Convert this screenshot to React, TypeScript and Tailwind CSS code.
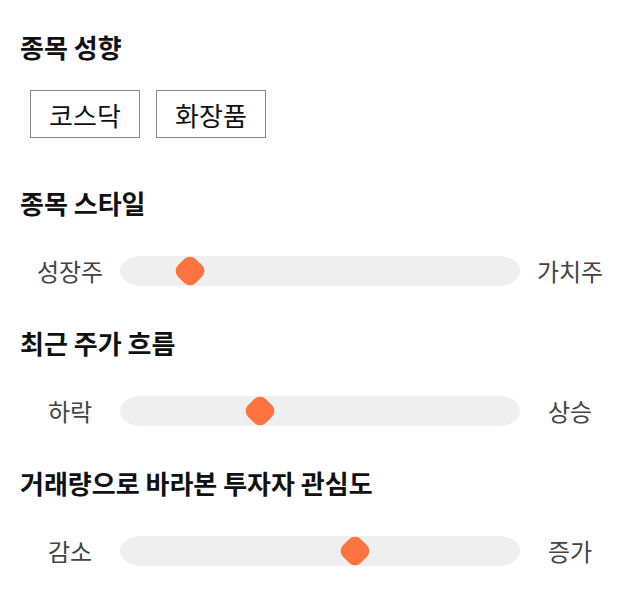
import React from 'react';

interface RangeRowProps {
  left: string;
  right: string;
  value: number; // 0..100
}

const RangeRow: React.FC<RangeRowProps> = ({ left, right, value }) => {
  return (
    <div className="flex items-center h-[30px] px-5">
      <span className="w-[100px] text-center text-[24px] leading-none text-[#444]">{left}</span>
      <div className="relative w-[400px] h-[30px] bg-[#efefef] rounded-[20px/15px]">
        <div
          className="absolute top-1/2 w-[25px] h-[25px] -translate-x-1/2 -translate-y-1/2 rotate-45 rounded-[8px] bg-[#ff733f]"
          style={{ left: `${value}%` }}
        />
      </div>
      <span className="w-[100px] text-center text-[24px] leading-none text-[#444]">{right}</span>
    </div>
  );
};

const SectionTitle: React.FC<{ children: React.ReactNode }> = ({ children }) => (
  <h2 className="px-5 text-[26px] leading-[32px] font-bold text-[#111]">{children}</h2>
);

export default function App() {
  return (
    <div
      className="w-[640px] h-[606px] bg-white pt-[31px]"
      style={{ fontFamily: '"Noto Sans CJK KR", "Noto Sans", sans-serif' }}
    >
      <SectionTitle>종목 성향</SectionTitle>
      <div className="flex gap-4 pl-[30px] mt-[27px]">
        <button className="w-[110px] h-[48px] border border-[#888] text-[26px] text-[#111] bg-white">
          코스닥
        </button>
        <button className="w-[110px] h-[48px] border border-[#888] text-[26px] text-[#111] bg-white">
          화장품
        </button>
      </div>

      <div className="mt-[49px]">
        <SectionTitle>종목 스타일</SectionTitle>
      </div>
      <div className="mt-[37px]">
        <RangeRow left="성장주" right="가치주" value={17.5} />
      </div>

      <div className="mt-[41px]">
        <SectionTitle>최근 주가 흐름</SectionTitle>
      </div>
      <div className="mt-[37px]">
        <RangeRow left="하락" right="상승" value={35} />
      </div>

      <div className="mt-[41px]">
        <SectionTitle>거래량으로 바라본 투자자 관심도</SectionTitle>
      </div>
      <div className="mt-[37px]">
        <RangeRow left="감소" right="증가" value={58.75} />
      </div>
    </div>
  );
}
